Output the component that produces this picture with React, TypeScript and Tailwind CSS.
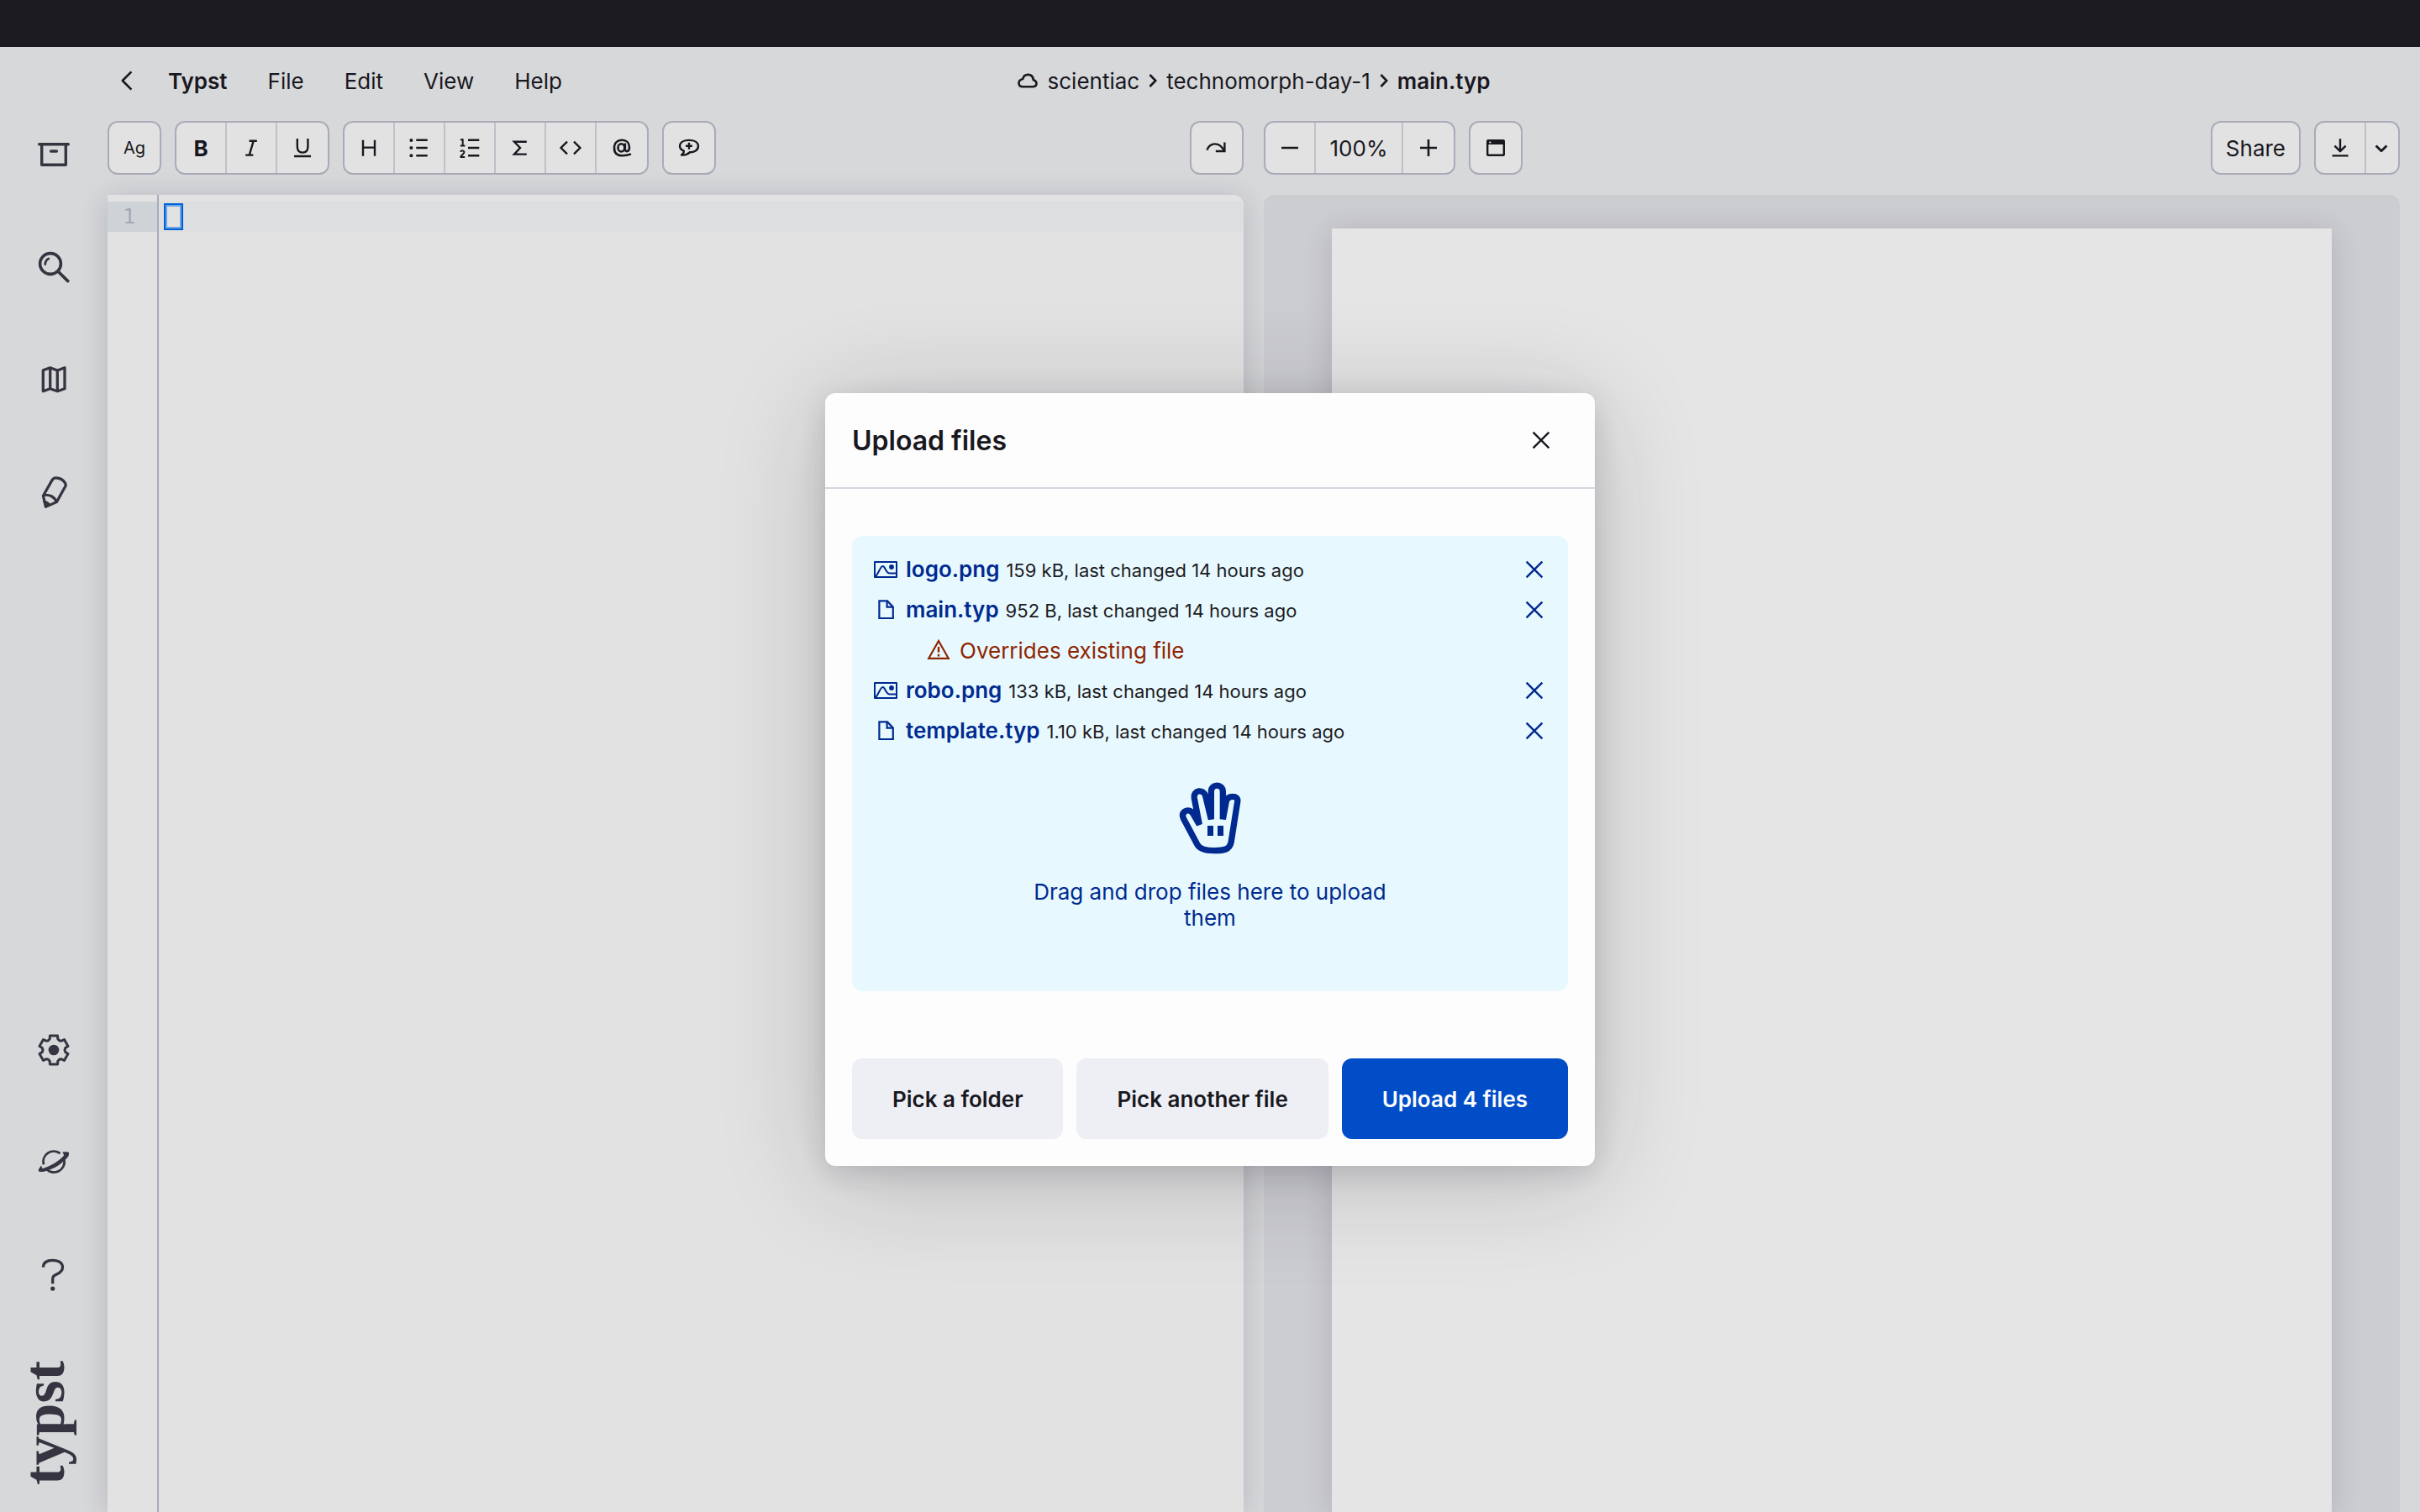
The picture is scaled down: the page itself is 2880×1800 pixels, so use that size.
import type { ReactNode } from "react";

type IconProps = { children: ReactNode; className?: string; size?: "sm" | "lg"; width?: number };

function Icon({ children, size = "sm", width = 2.4 }: IconProps) {
  return (
    <svg
      viewBox={size === "lg" ? "0 0 48 48" : "0 0 32 32"}
      className={size === "lg" ? "size-12 shrink-0" : "size-8 shrink-0"}
      fill="none"
      stroke="currentColor"
      strokeWidth={width}
      strokeLinejoin="round"
      aria-hidden="true"
    >
      {children}
    </svg>
  );
}

/* Sidebar */

function gearPath() {
  const points: string[] = [];
  const shape: [number, number][] = [
    [14, -20],
    [17.6, -15],
    [17.6, 15],
    [14, 20],
    [13, 30],
  ];
  for (let k = 0; k < 6; k++) {
    for (const [r, offset] of shape) {
      const a = ((-90 + 60 * k + offset) * Math.PI) / 180;
      points.push(`${(24 + r * Math.cos(a)).toFixed(2)} ${(24 + r * Math.sin(a)).toFixed(2)}`);
    }
  }
  return `M${points.join("L")}Z`;
}

const topItems: { label: string; icon: ReactNode }[] = [
  {
    label: "Files",
    icon: (
      <Icon size="lg" width={3.4}>
        <path d="M6.7 11.8H41.3" strokeLinecap="round" />
        <path d="M9.7 12V36.3H38.3V12" />
        <path d="M20.6 20H27.4" strokeLinecap="round" />
      </Icon>
    ),
  },
  {
    label: "Search",
    icon: (
      <Icon size="lg" width={3.6}>
        <circle cx="20" cy="20" r="12.4" />
        <path d="M29 29L40.8 40.6" strokeLinecap="round" />
        <path d="M13.8 20.5Q14 15.8 17.8 14" strokeLinecap="round" strokeWidth={2.8} />
      </Icon>
    ),
  },
  {
    label: "Outline",
    icon: (
      <Icon size="lg" width={3.3}>
        <path d="M11.3 12.8L19.7 9.8L28.3 13L37 9.8V34.8L28.3 37.8L19.7 34.8L11.3 37.8ZM19.7 10V35M28.3 13V37.8" />
      </Icon>
    ),
  },
  {
    label: "Improve",
    icon: (
      <Icon size="lg" width={3.2}>
        <path d="M11.4 28.2L22 9.6Q23.5 6.9 26.5 6.9Q31.2 6.9 34.8 9.8Q38.4 13 38.2 16.2L27.4 35.6L14.4 41.4Z" />
        <path d="M11.4 27.6C19 26.2 25 29.5 27.2 35.6" />
        <path d="M12 35C15.5 34.6 18 36 19.2 39L14.4 41.4Z" fill="currentColor" strokeWidth={1.5} />
      </Icon>
    ),
  },
];

const bottomItems: { label: string; icon: ReactNode }[] = [
  {
    label: "Settings",
    icon: (
      <Icon size="lg" width={3}>
        <path d={gearPath()} />
        <circle cx="24" cy="24" r="6.3" fill="currentColor" stroke="none" />
      </Icon>
    ),
  },
  {
    label: "Universe",
    icon: (
      <Icon size="lg" width={2.8}>
        <path d="M11.9 26.4A12.5 12.5 0 0 1 31.6 13.2" />
        <path d="M36.4 20.5A12.5 12.5 0 0 1 15.6 32.2" />
        <path
          d="M9 27.5L5.7 32.4Q5.5 34.8 7 34.9Q10 35.2 13.3 34.4C25 31.5 35 24.5 41.4 16.4Q42.8 12.8 41.6 11.4Q38 10.8 34.4 11.6L36.2 15.6C30 22.5 20 28.5 10.6 31.2Z"
          fill="currentColor"
          stroke="none"
        />
      </Icon>
    ),
  },
  {
    label: "Help",
    icon: (
      <Icon size="lg" width={3.3}>
        <path d="M11.4 14.6C11.6 8.4 16.5 6.3 22.7 6.3C30 6.3 34.5 9.4 34.5 14.8C34.5 19.8 31 21.6 27 23.3C23.5 24.8 22.7 25.8 22.7 29V34.3" />
        <circle cx="22.7" cy="40.1" r="2.6" fill="currentColor" stroke="none" />
      </Icon>
    ),
  },
];

function SideButton({ label, children }: { label: string; children: ReactNode }) {
  return (
    <button type="button" aria-label={label} className="flex size-16 items-center justify-center">
      {children}
    </button>
  );
}

function Sidebar() {
  return (
    <nav className="flex w-32 shrink-0 flex-col items-center justify-between pt-24 pb-8 text-[#353440]">
      <div className="flex flex-col gap-[70px]">
        {topItems.map((item) => (
          <SideButton key={item.label} label={item.label}>
            {item.icon}
          </SideButton>
        ))}
      </div>
      <div className="flex flex-col items-center gap-[70px]">
        {bottomItems.map((item) => (
          <SideButton key={item.label} label={item.label}>
            {item.icon}
          </SideButton>
        ))}
        <span className="mr-[22px] rotate-180 font-['Liberation_Serif',serif] text-[70px] leading-[64px] font-bold [writing-mode:vertical-rl]">
          typst
        </span>
      </div>
    </nav>
  );
}

/* Toolbar */

function Group({ children }: { children: ReactNode }) {
  return (
    <div className="flex h-16 divide-x-2 divide-[#c0c0c8] overflow-hidden rounded-xl border-2 border-[#aaabb9] bg-[#e2e2e2]">
      {children}
    </div>
  );
}

function Tool({ label, children }: { label: string; children: ReactNode }) {
  return (
    <button type="button" aria-label={label} className="flex w-15 items-center justify-center">
      {children}
    </button>
  );
}

function EditorToolbar() {
  return (
    <div className="flex h-16 gap-4">
      <Group>
        <Tool label="Font">
          <span className="text-xl">Ag</span>
        </Tool>
      </Group>
      <Group>
        <Tool label="Bold">
          <span className="font-bold">B</span>
        </Tool>
        <Tool label="Italic">
          <Icon>
            <path d="M13.6 7.8H22.8M9.2 24.6H18.4M18.6 8L13.8 24.4" />
          </Icon>
        </Tool>
        <Tool label="Underline">
          <Icon>
            <path d="M9.8 5V14.5C9.8 19.4 12 21.6 16.1 21.6C20.2 21.6 22.4 19.4 22.4 14.5V5M6 26H26" />
          </Icon>
        </Tool>
      </Group>
      <Group>
        <Tool label="Heading">
          <Icon>
            <path d="M9 6.7V25.7M23 6.7V25.7M9 15.6H23" />
          </Icon>
        </Tool>
        <Tool label="Bullet list">
          <Icon>
            <path d="M12.3 6.7H25.7M12.3 16H25.7M12.3 25.3H25.7" />
            <g fill="currentColor" stroke="none">
              <circle cx="6.4" cy="6.9" r="2" />
              <circle cx="6.4" cy="16" r="2" />
              <circle cx="6.4" cy="25.3" r="2" />
            </g>
          </Icon>
        </Tool>
        <Tool label="Numbered list">
          <Icon>
            <path d="M14 6.7H27.3M14 16H27.3M14 25.3H27.3" />
            <path d="M4.9 6.6L7.7 6V13.6M4.8 13.6H10.4" strokeWidth={2} />
            <path d="M5.2 20.9C5.6 18.8 9.6 18.8 9.4 21.3C9.3 23.2 6 24.4 5.2 26.9H10.2" strokeWidth={2} />
          </Icon>
        </Tool>
        <Tool label="Math">
          <Icon>
            <path d="M23.8 8.8H9L16 16L9 23.6H23.8" strokeLinejoin="miter" />
          </Icon>
        </Tool>
        <Tool label="Code">
          <Icon>
            <path d="M12 8.6L4.6 16L12 23.4M20 8.6L27.4 16L20 23.4" strokeLinejoin="miter" />
          </Icon>
        </Tool>
        <Tool label="Reference">
          <Icon width={2.6}>
            <ellipse cx="15.4" cy="15.9" rx="3.9" ry="4.6" />
            <path d="M19.8 10.6V17.4C19.8 21.4 25 21.2 25 15.5C25 10 21.5 6.8 16.4 6.8C10.4 6.8 7 10.6 7 16.2C7 22.2 10.6 25.2 16.6 25.2C20.4 25.2 23.6 24.7 27 23.4" />
          </Icon>
        </Tool>
      </Group>
      <Group>
        <Tool label="Comment">
          <Icon>
            <path d="M16 6.9C22 6.9 27 9.3 27 14C27 18.8 22 21.3 17 21.2C14.4 23.9 10.8 25 7 24.5C9.4 22.8 10 21.4 9.8 19.6C6.8 18.4 5 16.5 5 14C5 9.3 10 6.9 16 6.9Z" />
            <path d="M16 9.8V17.8M12 13.8H20" />
          </Icon>
        </Tool>
      </Group>
      <div className="ml-auto">
        <Group>
          <Tool label="Jump to preview">
            <Icon>
              <path d="M4.4 18.6C8 9.2 19 8.6 24.6 19" />
              <path d="M25.4 9.4V20H14.8" strokeLinejoin="miter" />
            </Icon>
          </Tool>
        </Group>
      </div>
    </div>
  );
}

function PreviewToolbar() {
  return (
    <div className="flex h-16 gap-4">
      <Group>
        <Tool label="Zoom out">
          <Icon width={2.6}>
            <path d="M6 16H26" />
          </Icon>
        </Tool>
        <button type="button" className="w-26">
          100%
        </button>
        <Tool label="Zoom in">
          <Icon width={2.6}>
            <path d="M6 16H26M16 6V26" />
          </Icon>
        </Tool>
      </Group>
      <Group>
        <Tool label="Presentation">
          <Icon>
            <rect x="6.2" y="7.2" width="19.6" height="17.6" rx="0.8" />
            <path
              d="M6.2 7.2H25.8V12H6.2ZM8.2 9.2A1.2 1.2 0 1 0 10.6 9.2A1.2 1.2 0 1 0 8.2 9.2Z"
              fill="currentColor"
              fillRule="evenodd"
              stroke="none"
            />
          </Icon>
        </Tool>
      </Group>
      <div className="ml-auto flex gap-4">
        <Group>
          <button type="button" className="px-4">
            Share
          </button>
        </Group>
        <Group>
          <Tool label="Export">
            <Icon>
              <path d="M16 5.3V20M9.4 13.6L16 20.2L22.6 13.6M6.6 25.4H25.6" />
            </Icon>
          </Tool>
          <button type="button" aria-label="Export options" className="flex w-[38px] items-center justify-center">
            <Icon width={2.8}>
              <path d="M8.6 13.4L15 19.8L21.4 13.4" />
            </Icon>
          </button>
        </Group>
      </div>
    </div>
  );
}

/* Menu row */

function Separator() {
  return (
    <svg viewBox="0 0 12 24" className="mx-2.5 h-6 w-3" fill="none" stroke="currentColor" strokeWidth="2.6" aria-hidden="true">
      <path d="M2.4 5L9.2 12L2.4 19" />
    </svg>
  );
}

function MenuRow() {
  return (
    <header className="grid h-20 grid-cols-[1fr_auto_1fr] items-center pr-6">
      <div className="flex items-center">
        <button type="button" aria-label="Back" className="flex w-12 justify-center">
          <Icon width={2.6}>
            <path d="M20.4 5.4L9.8 16L20.4 26.6" />
          </Icon>
        </button>
        <button type="button" className="px-6 font-semibold">
          Typst
        </button>
        {["File", "Edit", "View", "Help"].map((name) => (
          <button key={name} type="button" className="px-6">
            {name}
          </button>
        ))}
      </div>
      <div className="flex items-center">
        <svg viewBox="0 0 24 24" className="mr-3 size-6" fill="none" stroke="currentColor" strokeWidth="2.6" aria-hidden="true">
          <path d="M6.4 19.2H17.6C20.8 19.2 22.5 17.6 22.5 15.2C22.5 12.8 20.8 11.6 18.7 10.9C18.3 7 15.9 4.9 12.4 4.9C9.2 4.9 7 6.6 6.2 10C3.2 10.7 1.5 12.4 1.5 15C1.5 17.7 3.4 19.2 6.4 19.2Z" />
        </svg>
        <a href="#scientiac">scientiac</a>
        <Separator />
        <a href="#technomorph-day-1">technomorph-day-1</a>
        <Separator />
        <span className="font-semibold">main.typ</span>
      </div>
    </header>
  );
}

/* Panes */

function Editor() {
  return (
    <div className="flex grow rounded-tr-xl bg-[#e2e2e2] pt-2 shadow-[0_4px_32px_rgba(35,30,60,0.18)]">
      <div className="flex grow">
        <div className="w-[59px]">
          <div className="h-9 bg-[#ced3d7] pr-[26px] text-right font-['DejaVu_Sans_Mono',monospace] text-2xl leading-9 text-[#a3a6b3]">
            1
          </div>
        </div>
        <div className="-mt-2 w-0.5 bg-[#a8abbc]" />
        <div className="grow">
          <div className="flex h-9 items-center bg-[#dddee0] pl-1.5">
            <div className="h-8 w-[23px] border-2 border-[#0060d6] bg-[#e2e2e2] inset-ring-2 inset-ring-[#6fa6e4]" />
          </div>
        </div>
      </div>
    </div>
  );
}

function Preview() {
  return (
    <div className="flex grow justify-center overflow-hidden rounded-t-xl bg-[#cccdd1] pt-10">
      <div className="w-[88%] bg-[#e5e5e5] shadow-[0_4px_32px_rgba(35,30,60,0.16)]" />
    </div>
  );
}

/* Dialog */

const imageIcon = (
  <Icon width={2}>
    <rect x="3" y="7" width="26" height="18" />
    <path d="M4 24.4C8 20 9.6 12 12.6 12C15.6 12 16 20.6 21 20.6H29" />
    <circle cx="23" cy="13" r="2.9" fill="currentColor" stroke="none" />
  </Icon>
);

const fileIcon = (
  <Icon width={2.2}>
    <path d="M8.4 5.4H18L24.8 12.4V26H8.4Z" strokeLinejoin="miter" />
    <path d="M17.6 5.4V12.6H24.8" strokeLinejoin="miter" />
  </Icon>
);

const files = [
  { name: "logo.png", info: "159 kB, last changed 14 hours ago", icon: imageIcon, overrides: false },
  { name: "main.typ", info: "952 B, last changed 14 hours ago", icon: fileIcon, overrides: true },
  { name: "robo.png", info: "133 kB, last changed 14 hours ago", icon: imageIcon, overrides: false },
  { name: "template.typ", info: "1.10 kB, last changed 14 hours ago", icon: fileIcon, overrides: false },
];

function Cross() {
  return (
    <Icon>
      <path d="M6.6 6.6L25.4 25.4M25.4 6.6L6.6 25.4" />
    </Icon>
  );
}

function Hand() {
  return (
    <svg viewBox="600 84 240 276" className="h-[92px] w-20" fill="none" stroke="currentColor" aria-hidden="true">
      <path
        d="M682 245L660 207C652 193 639 192 630 198C621 205 621 214 625 223L674 315C683 334 706 338 736 338C770 338 790 334 795 310L818 164C821 150 811 145 801 145C790 145 781 150 778 162L766 226V127C766 98 724 98 724 127V226L704 143C698 117 659 120 664 151Z"
        strokeWidth="22"
        strokeLinejoin="bevel"
      />
      <path d="M704 143L724 130V226ZM766 130L778 160L766 226ZM660 190L668 170L682 245Z" fill="currentColor" />
      <path d="M711 249H732V285H711ZM747 249H768V285H747Z" fill="currentColor" stroke="none" />
    </svg>
  );
}

function UploadDialog() {
  return (
    <div
      role="dialog"
      aria-modal="true"
      aria-labelledby="upload-title"
      className="w-[916px] rounded-xl bg-[#fdfdfd] shadow-[0_8px_32px_rgba(28,24,48,0.15),0_16px_128px_rgba(28,27,34,0.2)]"
    >
      <div className="flex h-[114px] items-center justify-between border-b-2 border-[#d4d7df] px-8">
        <h1 id="upload-title" className="text-[32px] leading-[39px] font-semibold">
          Upload files
        </h1>
        <button type="button" aria-label="Close" className="flex size-16 items-center justify-center">
          <Cross />
        </button>
      </div>
      <div className="px-8 pt-14 pb-8">
        <div className="rounded-xl bg-[#e7f9ff] px-6 pt-4 pb-[72px] text-[#002a8f]">
          <ul>
            {files.map((file) => (
              <li key={file.name}>
                <div className="flex h-12 items-center gap-2">
                  {file.icon}
                  <div className="flex items-baseline gap-2">
                    <span className="font-semibold">{file.name}</span>
                    <span className="text-[22px] text-[#1c1b22]">{file.info}</span>
                  </div>
                  <button type="button" aria-label={`Remove ${file.name}`} className="ml-auto">
                    <Cross />
                  </button>
                </div>
                {file.overrides && (
                  <p className="flex h-12 items-center gap-2 pl-16 text-[#8f2400]">
                    <Icon width={2.2}>
                      <path d="M15 5L26.8 25.8H3.2Z" strokeLinejoin="miter" />
                      <path d="M15 12V18.6M15 20.8V23.4" strokeWidth={2.4} />
                    </Icon>
                    Overrides existing file
                  </p>
                )}
              </li>
            ))}
          </ul>
          <div className="flex flex-col items-center pt-[34px]">
            <Hand />
            <p className="mt-[26px] max-w-[432px] text-center">
              Drag and drop files here to upload them
            </p>
          </div>
        </div>
        <div className="mt-20 flex gap-4 font-semibold">
          <button type="button" className="h-24 grow rounded-xl bg-[#eeeff4]">
            Pick a folder
          </button>
          <button type="button" className="h-24 grow rounded-xl bg-[#eeeff4]">
            Pick another file
          </button>
          <button type="button" className="h-24 grow rounded-xl bg-[#004dc7] text-[#fdfdfd]">
            Upload 4 files
          </button>
        </div>
      </div>
    </div>
  );
}

export default function App() {
  return (
    <div className="flex h-screen flex-col overflow-hidden bg-[#d7d8da] font-[Inter,sans-serif] text-[26px] leading-[31px] text-[#19181f]">
      <div className="h-14 shrink-0 bg-[#1c1b22]" />
      <div className="relative flex min-h-0 grow">
        <Sidebar />
        <div className="flex grow flex-col">
          <MenuRow />
          <main className="mt-2 grid grow grid-cols-2 gap-6 pr-6">
            <section className="flex flex-col gap-6">
              <EditorToolbar />
              <Editor />
            </section>
            <section className="flex flex-col gap-6">
              <PreviewToolbar />
              <Preview />
            </section>
          </main>
        </div>
        <div className="absolute inset-0 flex items-center justify-center">
          <UploadDialog />
        </div>
      </div>
    </div>
  );
}
